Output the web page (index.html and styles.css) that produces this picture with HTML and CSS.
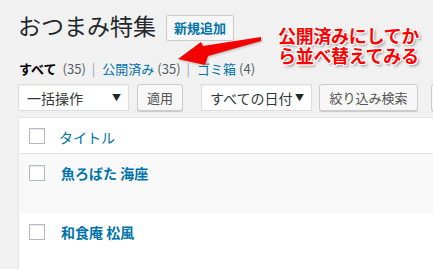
FILE: index.html
```html
<!DOCTYPE html>
<html lang="ja">

<head>
    <meta charset="UTF-8">
    <title>おつまみ特集</title>
    <link rel="stylesheet" href="styles.css">
</head>

<body>

    <!-- Page Header -->
    <div class="wrap">
        <div class="page-head">
            <h1 class="page-title">おつまみ特集</h1>
            <a class="title-action" href="#">新規追加</a>
        </div>

        <!-- Status Filters -->
        <ul class="subsubsub">
            <li class="current">すべて</li>
            <li class="count count-all">(35)</li>
            <li class="sep">|</li>
            <li><a href="#">公開済み</a></li>
            <li class="count">(35)</li>
            <li class="sep">|</li>
            <li><a href="#">ゴミ箱</a></li>
            <li class="count">(4)</li>
        </ul>

        <!-- Table Nav -->
        <div class="tablenav">
            <div class="select select-bulk">一括操作<span class="caret">▼</span></div>
            <button class="btn btn-apply">適用</button>
            <div class="select select-date">すべての日付<span class="caret">▼</span></div>
            <button class="btn btn-filter">絞り込み検索</button>
            <button class="btn btn-more"></button>
        </div>

        <!-- Posts Table -->
        <div class="posts-table">
            <div class="row row-head">
                <span class="check"></span>
                <a class="col-title" href="#">タイトル</a>
            </div>
            <div class="row row-alt">
                <span class="check"></span>
                <a class="post-title" href="#">魚ろばた 海座</a>
            </div>
            <div class="row">
                <span class="check"></span>
                <a class="post-title" href="#">和食庵 松風</a>
            </div>
        </div>
    </div>

    <!-- Annotation -->
    <svg class="arrow" width="433" height="80" viewBox="0 0 433 80">
        <polygon points="178,59 201,42 203,46 261,37 261,41 208,56 205,65" fill="#f40000" />
    </svg>
    <div class="note">公開済みにしてか<br>ら並べ替えてみる</div>

</body>
</html>
```

FILE: styles.css
```css
/* General Reset */
* {
    margin: 0;
    padding: 0;
    box-sizing: border-box;
}

body {
    font-family: "Noto Sans CJK JP", "Noto Sans", sans-serif;
    font-size: 13px;
    color: #23282d;
    background-color: #f1f1f1;
    overflow: hidden;
    width: 433px;
    height: 269px;
    position: relative;
}

a {
    color: #0073aa;
    text-decoration: none;
}

.wrap {
    padding-left: 18px;
    width: 700px;
}

/* Header */
.page-head {
    display: flex;
    align-items: flex-start;
    gap: 10px;
    padding-top: 10px;
}

.page-title {
    font-size: 23px;
    font-weight: 400;
    line-height: 30px;
}

.title-action {
    margin-top: 5px;
    height: 26px;
    line-height: 24px;
    padding: 0 7px;
    font-size: 13px;
    font-weight: 700;
    background-color: #f7f7f7;
    border: 1px solid #ccc;
    border-radius: 2px;
}

/* Status filters */
.subsubsub {
    list-style-type: none;
    display: flex;
    margin-top: 18px;
    line-height: 20px;
    padding-left: 1px;
}

    .subsubsub .current {
        font-weight: 700;
        color: #000;
    }

    .subsubsub .count {
        color: #555d66;
        margin-left: 3px;
    }

        .subsubsub .count-all {
            margin-left: 6px;
        }

    .subsubsub .sep {
        color: #a0a5aa;
        margin: 0 7px 0 6px;
    }

/* Table nav */
.tablenav {
    display: flex;
    align-items: center;
    margin-top: 5px;
    height: 27px;
}

.select {
    display: flex;
    align-items: center;
    justify-content: space-between;
    height: 27px;
    padding: 0 7px 0 8px;
    font-size: 14px;
    white-space: nowrap;
    color: #32373c;
    background-color: #fff;
    border: 1px solid #ddd;
    box-shadow: inset 0 1px 2px rgba(0, 0, 0, 0.07);
}

    .select .caret {
        font-size: 9px;
        color: #23282d;
    }

.select-bulk {
    width: 111px;
}

.select-date {
    width: 111px;
    margin-left: 18px;
}

.btn {
    flex: none;
    height: 27px;
    padding: 0;
    text-align: center;
    white-space: nowrap;
    font-family: inherit;
    font-size: 13px;
    color: #555;
    background-color: #f7f7f7;
    border: 1px solid #ccc;
    border-radius: 3px;
    box-shadow: 0 1px 0 #ccc;
}

.btn-apply {
    width: 46px;
    margin-left: 8px;
}

.btn-filter {
    width: 99px;
    margin-left: 7px;
}

.btn-more {
    width: 60px;
    margin-left: 13px;
}

/* Posts table */
.posts-table {
    margin-top: 6px;
    background-color: #fff;
    border: 1px solid #e5e5e5;
    border-right: none;
    box-shadow: 0 1px 1px rgba(0, 0, 0, 0.04);
}

.row {
    display: flex;
    align-items: flex-start;
    height: 59px;
    padding: 11px 0 0 10px;
}

.row-head {
    height: 36px;
    padding-top: 10px;
    border-bottom: 1px solid #e1e1e1;
}

.row-alt {
    background-color: #f9f9f9;
}

.check {
    width: 16px;
    height: 16px;
    border: 1px solid #b4b9be;
    background-color: #fff;
    box-shadow: inset 0 1px 2px rgba(0, 0, 0, 0.1);
}

.col-title {
    margin-left: 14px;
    font-size: 14px;
    line-height: 18px;
}

.post-title {
    margin-left: 16px;
    font-size: 14px;
    font-weight: 700;
    line-height: 16px;
}

/* Annotation overlay */
.arrow {
    position: absolute;
    left: 0;
    top: 0;
    filter: drop-shadow(1px 1px 1px rgba(0, 0, 0, 0.25));
}

.note {
    position: absolute;
    left: 278px;
    top: 25px;
    font-size: 18px;
    font-weight: 700;
    line-height: 20px;
    letter-spacing: -0.3px;
    color: #f00;
    text-shadow:
        1px 0 0 #fff, -1px 0 0 #fff, 0 1px 0 #fff, 0 -1px 0 #fff,
        1px 1px 0 #fff, -1px -1px 0 #fff, 1px -1px 0 #fff, -1px 1px 0 #fff,
        2px 2px 3px rgba(0, 0, 0, 0.45);
}
```
